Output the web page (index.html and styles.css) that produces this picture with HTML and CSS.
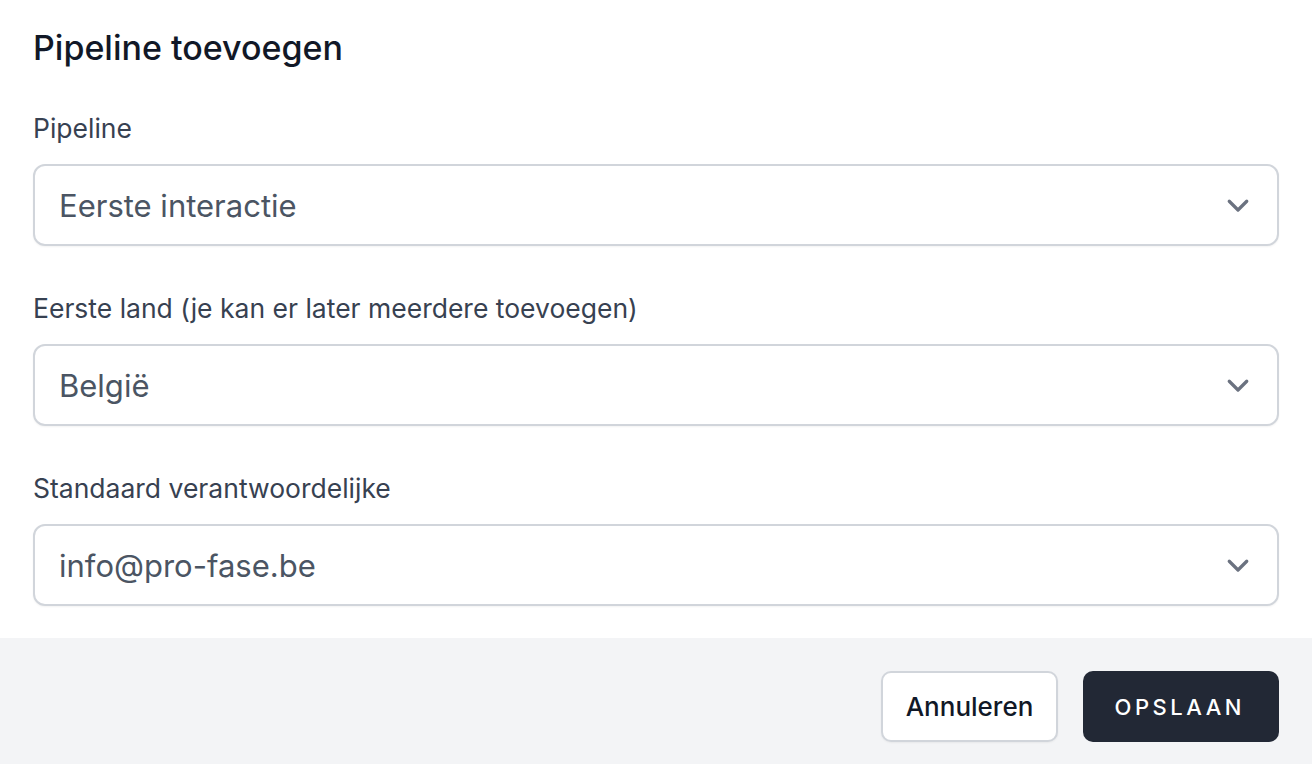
FILE: index.html
```html
<!DOCTYPE html>
<html lang="nl">
<head>
  <meta charset="UTF-8" />
  <meta name="viewport" content="width=device-width, initial-scale=1.0"/>
  <title>Pipeline toevoegen</title>
  <link rel="stylesheet" href="styles.css">
</head>
<body>
  <div class="modal">
    <div class="modal-body">
      <h2 class="modal-title">Pipeline toevoegen</h2>

      <div class="field">
        <label class="field-label" for="pipeline">Pipeline</label>
        <div class="select">
          <span class="select-value">Eerste interactie</span>
          <svg class="chevron" viewBox="0 0 24 24" width="30" height="30" fill="none" stroke="currentColor" stroke-width="2.6" stroke-linecap="round" stroke-linejoin="round"><path d="M5 9l7 7 7-7"/></svg>
        </div>
      </div>

      <div class="field">
        <label class="field-label" for="land">Eerste land (je kan er later meerdere toevoegen)</label>
        <div class="select">
          <span class="select-value">België</span>
          <svg class="chevron" viewBox="0 0 24 24" width="30" height="30" fill="none" stroke="currentColor" stroke-width="2.6" stroke-linecap="round" stroke-linejoin="round"><path d="M5 9l7 7 7-7"/></svg>
        </div>
      </div>

      <div class="field">
        <label class="field-label" for="owner">Standaard verantwoordelijke</label>
        <div class="select">
          <span class="select-value">info@pro-fase.be</span>
          <svg class="chevron" viewBox="0 0 24 24" width="30" height="30" fill="none" stroke="currentColor" stroke-width="2.6" stroke-linecap="round" stroke-linejoin="round"><path d="M5 9l7 7 7-7"/></svg>
        </div>
      </div>
    </div>

    <div class="modal-footer">
      <button class="btn btn-secondary">Annuleren</button>
      <button class="btn btn-primary">OPSLAAN</button>
    </div>
  </div>
</body>
</html>
```

FILE: styles.css
```css
* {
  box-sizing: border-box;
}

body {
  margin: 0;
  font-family: Inter, "Noto Sans", sans-serif;
  background: #fff;
  color: #374151;
}

.modal-body {
  padding: 24px 33px 32px;
}

.modal-title {
  margin: 0 0 36px;
  font-size: 34px;
  line-height: 48px;
  font-weight: 500;
  color: #111827;
}

.field + .field {
  margin-top: 42px;
}

.field-label {
  display: block;
  font-size: 26.5px;
  line-height: 40px;
  color: #374151;
  margin-bottom: 16px;
}

.select {
  display: flex;
  align-items: center;
  justify-content: space-between;
  height: 82px;
  padding: 0 26px 0 24px;
  border: 2px solid #d1d5db;
  border-radius: 12px;
  background: #fff;
  box-shadow: 0 1px 2px rgba(0, 0, 0, 0.05);
}

.select-value {
  font-size: 31px;
  color: #4b5563;
}

.chevron {
  color: #6b7280;
  margin-right: -2px;
}

.modal-footer {
  display: flex;
  justify-content: flex-end;
  gap: 25px;
  padding: 33px 33px;
  background: #f3f4f6;
}

.btn {
  height: 71px;
  border-radius: 10px;
  font-family: inherit;
  font-size: 26px;
  font-weight: 500;
  cursor: pointer;
}

.btn-secondary {
  width: 177px;
  background: #fff;
  color: #111827;
  border: 2px solid #d1d5db;
  box-shadow: 0 1px 2px rgba(0, 0, 0, 0.05);
}

.btn-primary {
  width: 196px;
  background: #222835;
  color: #fff;
  border: none;
  font-size: 22px;
  letter-spacing: 3.5px;
  padding-left: 3.5px;
}
```
